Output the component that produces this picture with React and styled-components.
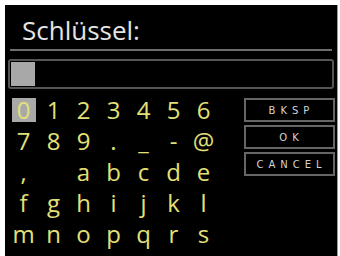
import styled, { createGlobalStyle } from "styled-components";

const Global = createGlobalStyle`
  body {
    margin: 0;
    background: #fff;
    font-family: "Open Sans", sans-serif;
  }
`;

const Screen = styled.div`
  margin: 5px 0 0 5px;
  width: 333px;
  height: 251px;
  background: #000;
  border-right: 1px solid #9a9a9a;
  padding: 0 3px;
  box-sizing: border-box;
  display: flex;
  flex-direction: column;
`;

const Title = styled.div`
  margin: 0 2px;
  height: 46px;
  box-sizing: border-box;
  border-bottom: 2px solid #6e6e6e;
  padding: 10px 0 0 12px;
  color: #e4e4e4;
  font-size: 26px;
  line-height: 30px;
`;

const Input = styled.div`
  margin-top: 8px;
  height: 30px;
  box-sizing: border-box;
  border: 2px solid #555;
  border-radius: 3px;
  padding: 1px;
  display: flex;
`;

const Cursor = styled.div`
  width: 24px;
  background: #a8a8a8;
`;

const Body = styled.div`
  display: flex;
  margin-top: 5px;
`;

const Keys = styled.div`
  display: grid;
  grid-template-columns: repeat(7, 30px);
  grid-auto-rows: 31.2px;
  margin-left: 0.5px;
`;

const Key = styled.div`
  display: flex;
  align-items: center;
  justify-content: center;
  color: #e3e077;
  font-size: 24px;
  line-height: 1;
  span {
    width: 24px;
    height: 24px;
    display: flex;
    align-items: center;
    justify-content: center;
    background: ${(p) => (p.$active ? "#a9a9a9" : "transparent")};
  }
`;

const Side = styled.div`
  margin-left: 25px;
  margin-top: 4px;
  display: flex;
  flex-direction: column;
  gap: 3px;
`;

const Button = styled.div`
  width: 91px;
  height: 24px;
  box-sizing: border-box;
  border: 2px solid #666;
  display: flex;
  align-items: center;
  justify-content: center;
  color: #d4d4d4;
  font-family: "DejaVu Sans", sans-serif;
  font-size: 10px;
  letter-spacing: 5px;
  padding-left: 5px;
`;

const rows = [
  ["0", "1", "2", "3", "4", "5", "6"],
  ["7", "8", "9", ".", "_", "-", "@"],
  [",", " ", "a", "b", "c", "d", "e"],
  ["f", "g", "h", "i", "j", "k", "l"],
  ["m", "n", "o", "p", "q", "r", "s"],
];

function App() {
  return (
    <>
      <Global />
      <Screen>
        <Title>Schlüssel:</Title>
        <Input>
          <Cursor />
        </Input>
        <Body>
          <Keys>
            {rows.flat().map((c, i) => (
              <Key key={i} $active={i === 0}>
                <span>{c}</span>
              </Key>
            ))}
          </Keys>
          <Side>
            <Button>BKSP</Button>
            <Button>OK</Button>
            <Button>CANCEL</Button>
          </Side>
        </Body>
      </Screen>
    </>
  );
}

export default App;
